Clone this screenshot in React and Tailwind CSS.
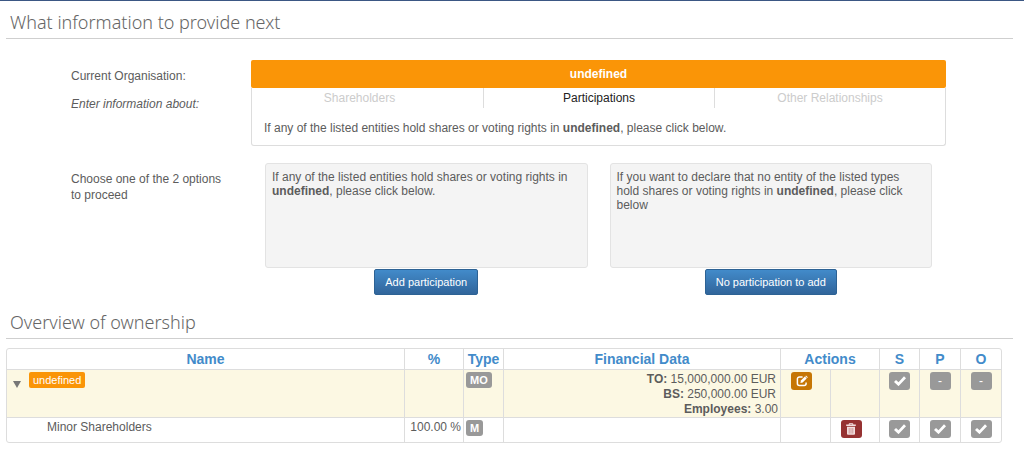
import React, { useState } from 'react';

const tabs = ['Shareholders', 'Participations', 'Other Relationships'];

const CheckIcon = () => (
    <svg className="w-3.5 h-3" viewBox="0 0 14 12" aria-hidden="true">
        <path d="M1 7.1l2-2 2.5 2.1L11 1.3l2 1.9-7.1 7.6a.6.6 0 0 1-.8 0z" fill="currentColor" />
    </svg>
);

const EditIcon = () => (
    <svg className="w-3 h-3" viewBox="0 0 12 12" fill="none" aria-hidden="true">
        <path d="M6.6 1.9H3.4A2 2 0 0 0 1.4 3.9v4.7a2 2 0 0 0 2 2h4.7a2 2 0 0 0 2-2V7.4" stroke="currentColor" strokeWidth="1.5" />
        <path d="M4.4 7.9l.5-2.3L8.9 1.6l1.8 1.8-4 4z" fill="currentColor" />
        <path d="M9.3 1.2l.7-.7 1.8 1.8-.7.7z" fill="currentColor" />
    </svg>
);

const TrashIcon = () => (
    <svg className="w-3 h-3" viewBox="0 0 12 12" fill="none" aria-hidden="true">
        <path d="M4.2 2V.7h3.6V2" stroke="currentColor" />
        <path d="M1.2 1.6h9.6v1.5H1.2z" fill="currentColor" />
        <path d="M2 3.7h8v7.1a1 1 0 0 1-1 1H3a1 1 0 0 1-1-1z" fill="currentColor" />
        <path d="M4.2 5v5.6M6 5v5.6M7.8 5v5.6" stroke="#963232" strokeWidth=".4" />
    </svg>
);

const SectionHeading = ({ children }) => (
    <h2 className="border-b border-[#cfcfcf] pl-1 pb-1 font-['Noto_Sans',sans-serif] text-lg leading-6 font-light text-[#666]">
        {children}
    </h2>
);

const Status = ({ done, label }) => (
    <button
        type="button"
        aria-label={label}
        className="inline-flex h-[18px] w-[21px] items-center justify-center rounded-[3px] bg-[#999] text-white align-top"
    >
        {done ? <CheckIcon /> : <span className="leading-3">-</span>}
    </button>
);

const TypeBadge = ({ children }) => (
    <span className="inline-block rounded-[3px] bg-[#999] px-1 text-[11px] leading-4 font-bold text-white">{children}</span>
);

const OptionCard = ({ text, action }) => (
    <div className="flex flex-1 flex-col items-center gap-px">
        <div className="min-h-[105px] w-full rounded-[3px] border border-[#e3e3e3] bg-[#f4f4f4] px-1.5 py-1.5 leading-[14px]">
            {text}
        </div>
        <button
            type="button"
            className="rounded-xs border border-[#2d6294] bg-linear-to-b from-[#428bca] to-[#31659b] px-[10px] py-1 text-[11px] leading-4 text-white"
        >
            {action}
        </button>
    </div>
);

const App = () => {
    const [activeTab, setActiveTab] = useState('Participations');
    const [open, setOpen] = useState(true);

    const th = 'border-b border-l border-[#ddd] first:border-l-0 p-0 text-sm leading-5 font-bold text-[#428bca]';
    const td = 'border-l border-[#ddd] first:border-l-0 p-0 align-top';

    return (
        <div className="border-t border-[#3b5784] bg-white pb-8 font-['Liberation_Sans',Arial,sans-serif] text-xs text-[#5c5c5c]">
            <div className="pt-[9px] pl-1.5 pr-[11px]">
                <SectionHeading>What information to provide next</SectionHeading>

                <div className="mt-[21px] flex pl-[65px] pr-[67px]">
                    <div className="w-[180px] shrink-0 pt-2">
                        <p className="leading-4">Current Organisation:</p>
                        <p className="mt-3 leading-4 italic">Enter information about:</p>
                    </div>
                    <div className="flex-1">
                        <div className="rounded-xs bg-[#fa9507] text-center leading-7 font-bold text-white">undefined</div>
                        <div className="rounded-b-[3px] border border-t-0 border-[#ddd]">
                            <div className="flex">
                                {tabs.map((tab) => (
                                    <button
                                        key={tab}
                                        type="button"
                                        onClick={() => setActiveTab(tab)}
                                        className={`w-1/3 border-l border-[#ddd] pt-0.5 pb-0.5 leading-4 first:border-l-0 first:pr-4 ${tab === activeTab ? 'text-[#222]' : 'text-[#ccc]'}`}
                                    >
                                        {tab}
                                    </button>
                                ))}
                            </div>
                            <p className="px-3 pt-3 pb-[9px] leading-4">
                                If any of the listed entities hold shares or voting rights in <b>undefined</b>, please click below.
                            </p>
                        </div>
                    </div>
                </div>

                <div className="mt-[17px] flex pl-[65px] pr-[81px]">
                    <p className="w-[194px] shrink-0 pt-2 pr-8 leading-4">Choose one of the 2 options to proceed</p>
                    <div className="flex flex-1 gap-[22px]">
                        <OptionCard
                            text={<>If any of the listed entities hold shares or voting rights in <b>undefined</b>, please click below.</>}
                            action="Add participation"
                        />
                        <OptionCard
                            text={<>If you want to declare that no entity of the listed types hold shares or voting rights in <b>undefined</b>, please click below</>}
                            action="No participation to add"
                        />
                    </div>
                </div>

                <div className="mt-[15px]">
                    <SectionHeading>Overview of ownership</SectionHeading>
                </div>

                <div className="mt-[9px] mr-[11px] overflow-hidden rounded-[3px] border border-[#ddd]">
                    <table className="w-full table-fixed border-separate border-spacing-0">
                        <colgroup>
                            <col />
                            <col className="w-[59px]" />
                            <col className="w-[40px]" />
                            <col className="w-[277px]" />
                            <col className="w-[50px]" />
                            <col className="w-[49px]" />
                            <col className="w-[40px]" />
                            <col className="w-[41px]" />
                            <col className="w-[41px]" />
                        </colgroup>
                        <thead>
                            <tr>
                                <th className={th}>Name</th>
                                <th className={th}>%</th>
                                <th className={th}>Type</th>
                                <th className={th}>Financial Data</th>
                                <th className={th} colSpan={2}>Actions</th>
                                <th className={th}>S</th>
                                <th className={th}>P</th>
                                <th className={th}>O</th>
                            </tr>
                        </thead>
                        <tbody>
                            <tr className="bg-[#fcf8e3]">
                                <td className={td}>
                                    <div className="flex items-start gap-1.5 pt-0.5 pl-1">
                                        <button type="button" aria-label="Toggle" aria-expanded={open} onClick={() => setOpen(!open)} className="mt-2 px-px">
                                            <svg className={open ? 'w-2.5 h-2' : 'w-2.5 h-2 -rotate-90'} viewBox="0 0 10 8" aria-hidden="true">
                                                <path d="M1 1h8L5 8z" fill="#777" />
                                            </svg>
                                        </button>
                                        <span className="rounded-xs bg-[#fa9507] px-1 text-[11px] leading-4 text-white">undefined</span>
                                    </div>
                                </td>
                                <td className={td}></td>
                                <td className={`${td} pt-0.5 pl-0.5`}><TypeBadge>MO</TypeBadge></td>
                                <td className={`${td} pt-0.5 pr-0.5 text-right leading-[15px]`}>
                                    <p className="pr-0.5"><b>TO:</b> 15,000,000.00 EUR</p>
                                    <p className="pr-0.5"><b>BS:</b> 250,000.00 EUR</p>
                                    <p><b>Employees:</b> 3.00</p>
                                </td>
                                <td className={`${td} pt-0.5 pr-2 text-center`}>
                                    <button type="button" aria-label="Edit" className="inline-flex h-[18px] w-[21px] items-center justify-center rounded-[3px] bg-[#c67605] align-top text-white">
                                        <EditIcon />
                                    </button>
                                </td>
                                <td className={td}></td>
                                <td className={`${td} pt-0.5 text-center`}><Status done label="Shareholders complete" /></td>
                                <td className={`${td} pt-0.5 text-center`}><Status label="No participations" /></td>
                                <td className={`${td} pt-0.5 text-center`}><Status label="No other relationships" /></td>
                            </tr>
                            {open && (
                                <tr className="h-[25px]">
                                    <td className={`${td} border-t pt-px pl-10 leading-4`}>Minor Shareholders</td>
                                    <td className={`${td} border-t pt-px pr-0.5 text-right leading-4`}>100.00 %</td>
                                    <td className={`${td} border-t pt-0.5 pl-0.5`}><TypeBadge>M</TypeBadge></td>
                                    <td className={`${td} border-t`}></td>
                                    <td className={`${td} border-t`}></td>
                                    <td className={`${td} border-t pt-0.5 pr-2 text-center`}>
                                        <button type="button" aria-label="Delete" className="inline-flex h-[18px] w-[21px] items-center justify-center rounded-[3px] bg-[#963232] align-top text-[#f3dede]">
                                            <TrashIcon />
                                        </button>
                                    </td>
                                    <td className={`${td} border-t pt-0.5 text-center`}><Status done label="Shareholders complete" /></td>
                                    <td className={`${td} border-t pt-0.5 text-center`}><Status done label="Participations complete" /></td>
                                    <td className={`${td} border-t pt-0.5 text-center`}><Status done label="Other relationships complete" /></td>
                                </tr>
                            )}
                        </tbody>
                    </table>
                </div>
            </div>
        </div>
    );
};

export default App;
